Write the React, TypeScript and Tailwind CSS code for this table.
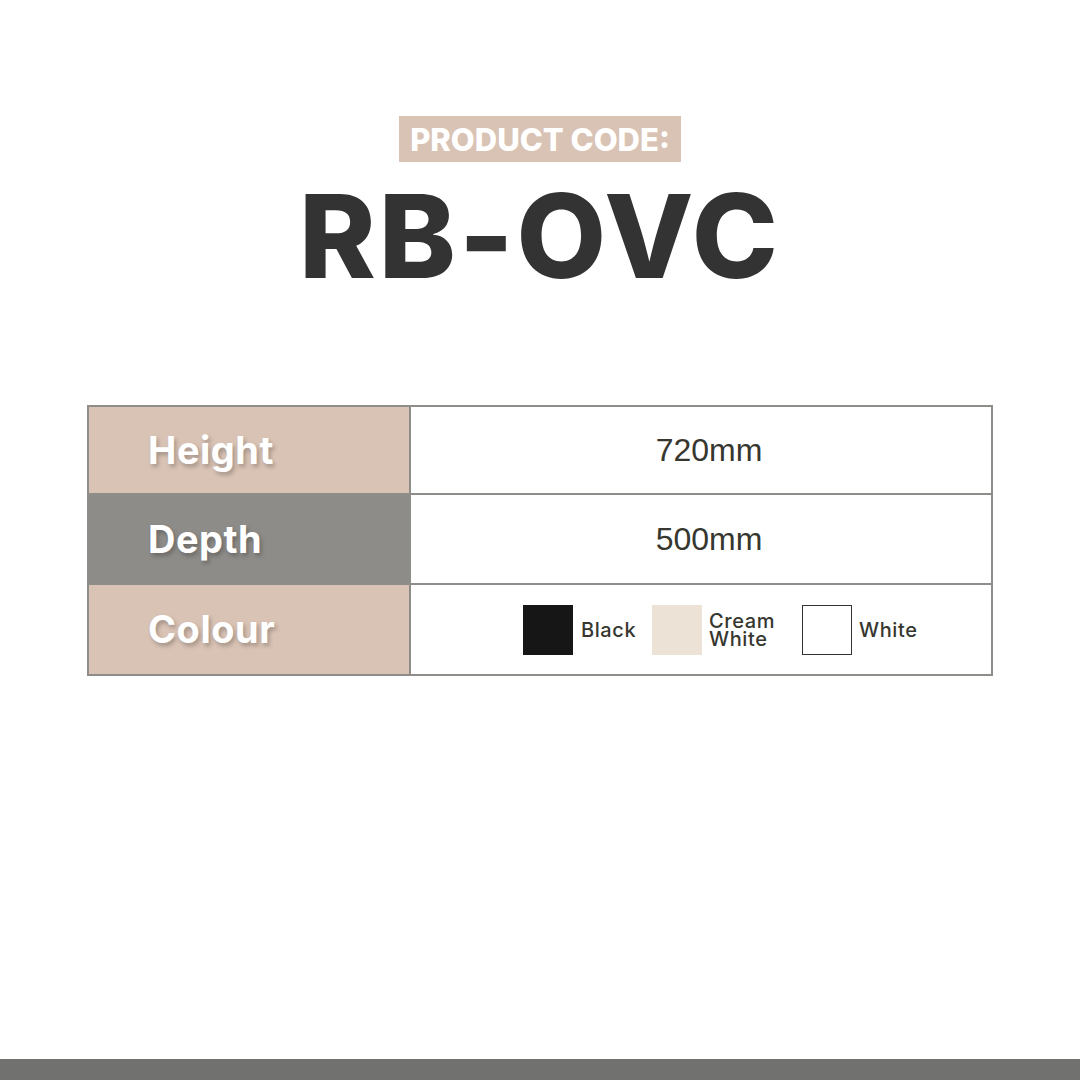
export default function App() {
  const font = { fontFamily: "Inter, 'Open Sans', sans-serif" };
  return (
    <div className="w-[1080px] h-[1080px] bg-white flex flex-col" style={font}>
      <div className="flex flex-col items-center pt-[116px]">
        <div className="bg-[#d9c3b5] h-[46px] w-[282px] flex items-center justify-center">
          <span className="text-white font-extrabold text-[31px] leading-none tracking-[0px]">PRODUCT CODE:</span>
        </div>
        <div className="mt-[14px] h-[120px] flex items-center text-[#333333] font-extrabold text-[116px] leading-none tracking-[3px]">
          RB-OVC
        </div>
      </div>
      <div className="mt-[109px] mx-[87px] border-2 border-[#8f8d89] flex flex-col">
        {[
          { label: "Height", bg: "bg-[#d9c3b5]", value: "720mm", h: "h-[88px]" },
          { label: "Depth", bg: "bg-[#8e8c88]", value: "500mm", h: "h-[90px]" },
        ].map((r) => (
          <div key={r.label} className={`flex ${r.h} border-b-2 border-[#8f8d89]`}>
            <div className={`w-[322px] ${r.bg} border-r-2 border-[#8f8d89] flex items-center pl-[59px]`}>
              <span className="text-white font-bold text-[38px] tracking-[0.5px] [text-shadow:2px_3px_4px_rgba(0,0,0,0.25)]">{r.label}</span>
            </div>
            <div className="flex-1 flex items-center justify-center pl-[16px] text-[#36372f] text-[32px]" style={{ fontFamily: "'Liberation Sans', Arial, sans-serif" }}>
              {r.value}
            </div>
          </div>
        ))}
        <div className="flex h-[89px]">
          <div className="w-[322px] bg-[#d9c3b5] border-r-2 border-[#8f8d89] flex items-center pl-[59px]">
            <span className="text-white font-bold text-[38px] tracking-[0.5px] [text-shadow:2px_3px_4px_rgba(0,0,0,0.25)]">Colour</span>
          </div>
          <div className="flex-1 flex items-center pl-[112px] text-[#36372f] text-[20px] font-medium tracking-[0.6px]">
            <div className="w-[50px] h-[50px] bg-[#161616]" />
            <span className="ml-[8px] w-[71px]">Black</span>
            <div className="w-[50px] h-[50px] bg-[#ece3d6]" />
            <span className="ml-[7px] w-[93px] leading-[18px] flex flex-col">
              <span>Cream</span>
              <span>White</span>
            </span>
            <div className="w-[50px] h-[50px] bg-white border border-[#333]" />
            <span className="ml-[7px]">White</span>
          </div>
        </div>
      </div>
      <div className="mt-auto h-[21px] bg-[#717270]" />
    </div>
  );
}
